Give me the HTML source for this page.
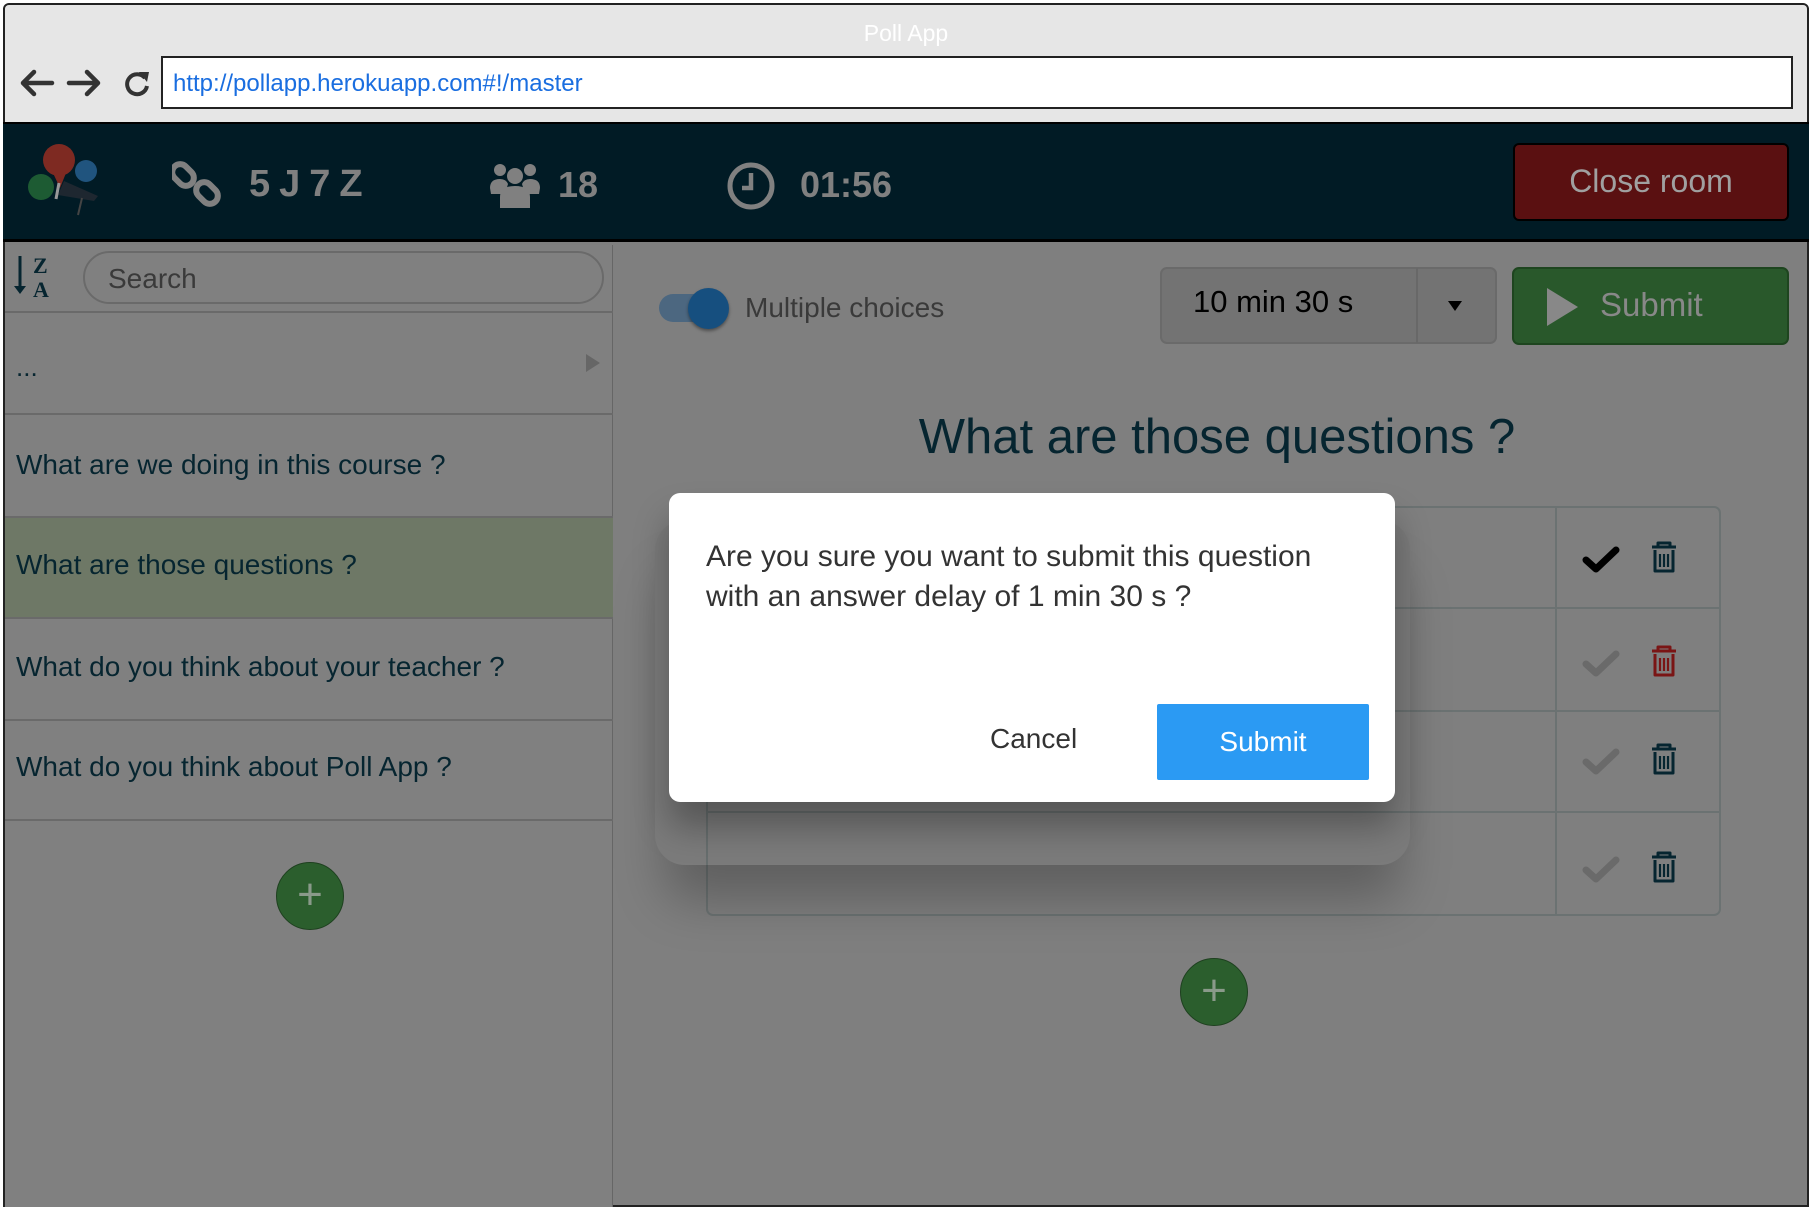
<!DOCTYPE html>
<html><head><meta charset="utf-8"><style>
*{box-sizing:border-box;margin:0;padding:0}
body{width:1812px;height:1210px;background:#fff;font-family:"Liberation Sans",Arial,sans-serif;position:relative;overflow:hidden}
.abs{position:absolute}
</style></head><body>
<div class="abs" style="left:3px;top:3px;width:1806px;height:1204px;border:2px solid #222;border-radius:6px 6px 0 0;background:#7f7f7f;overflow:hidden">
  <div class="abs" style="left:0;top:0;width:1802px;height:118px;background:#e6e6e6"></div>
</div>
<div class="abs" style="left:0;top:20px;width:1812px;text-align:center;color:#fff;font-size:23px">Poll App</div>
<svg class="abs" style="left:18px;top:66px" width="135" height="34" viewBox="0 0 135 34">
 <g stroke="#333" stroke-width="4.5" fill="none" stroke-linecap="round" stroke-linejoin="round">
  <path d="M34 17H5M16 6L5 17L16 28"/>
  <path d="M51 17H80M69 6L80 17L69 28"/>
 </g>
 <path d="M127 12A10 10 0 1 0 129 20" stroke="#333" stroke-width="4" fill="none"/>
 <path d="M121 6L131 6L129 16Z" fill="#333"/>
</svg>
<div class="abs" style="left:161px;top:56px;width:1632px;height:53px;border:2.5px solid #222;background:#fff;color:#1a6ee0;font-size:24px;line-height:52px;padding-left:10px">http://pollapp.herokuapp.com#!/master</div>
<div class="abs" style="left:3px;top:122px;width:1806px;height:120px;background:#011b25;border-top:2px solid #000;border-bottom:3px solid #000"></div>
<svg class="abs" style="left:26px;top:143px" width="80" height="75" viewBox="0 0 80 75">
 <circle cx="33" cy="17" r="16" fill="#7e2a22"/><path d="M27 30L34 45L40 30Z" fill="#7e2a22"/>
 <circle cx="60" cy="28" r="11" fill="#20547e"/>
 <circle cx="15" cy="44" r="13" fill="#1d5b33"/>
 <path d="M32 52L38 38L72 53L68 58Z" fill="#1e2730"/><path d="M33 40L30 56" stroke="#999" stroke-width="3"/>
 <path d="M56 55L52 72" stroke="#444" stroke-width="2"/>
</svg>
<svg class="abs" style="left:172px;top:158px" width="52" height="52" viewBox="0 0 52 52">
 <g fill="none" stroke="#808080" stroke-width="6"><rect x="3" y="5" width="16" height="24" rx="8" transform="rotate(-45 11 17)"/><rect x="27" y="23" width="16" height="24" rx="8" transform="rotate(-45 35 35)"/></g>
</svg>
<div class="abs" style="left:249px;top:162px;color:#808080;font-weight:bold;font-size:38px;letter-spacing:9px;line-height:44px">5J7Z</div>
<svg class="abs" style="left:490px;top:162px" width="50" height="46" viewBox="0 0 50 46">
 <g fill="#808080"><circle cx="10" cy="8" r="6"/><circle cx="40" cy="8" r="6"/><circle cx="25" cy="14" r="8"/>
 <path d="M0 26Q0 17 10 17Q16 17 18 22L15 32H1Z"/><path d="M50 26Q50 17 40 17Q34 17 32 22L35 32H49Z"/>
 <path d="M10 46V35Q10 24 25 24Q40 24 40 35V46Z"/></g>
</svg>
<div class="abs" style="left:558px;top:165px;color:#808080;font-weight:bold;font-size:36px;line-height:40px">18</div>
<svg class="abs" style="left:726px;top:161px" width="50" height="50" viewBox="0 0 50 50">
 <circle cx="25" cy="25" r="21" fill="none" stroke="#808080" stroke-width="5"/><path d="M25 12V27H16" fill="none" stroke="#808080" stroke-width="4.5"/>
</svg>
<div class="abs" style="left:800px;top:165px;color:#808080;font-weight:bold;font-size:36px;line-height:40px">01:56</div>
<div class="abs" style="left:1513px;top:143px;width:276px;height:78px;background:#5a1011;border:2px solid #000;border-radius:6px;color:#a0a0a0;font-size:32px;text-align:center;line-height:72px">Close room</div>
<div class="abs" style="left:5px;top:245px;width:608px;height:962px;background:#808080;border-right:1px solid #666"></div>
<svg class="abs" style="left:14px;top:254px" width="40" height="46" viewBox="0 0 40 46">
 <path d="M6 2V36" stroke="#062530" stroke-width="3"/><path d="M0 32L6 40L12 32Z" fill="#062530"/>
 <text x="19" y="19" font-family="Liberation Serif" font-weight="bold" font-size="22" fill="#062530">Z</text>
 <text x="19" y="43" font-family="Liberation Serif" font-weight="bold" font-size="22" fill="#062530">A</text>
</svg>
<div class="abs" style="left:83px;top:251px;width:521px;height:53px;border:2px solid #6a6a6a;border-radius:27px;color:#3a3a3a;font-size:28px;line-height:52px;padding-left:23px">Search</div>
<div class="abs" style="left:5px;top:311px;width:608px;height:2px;background:#6a6a6a"></div>
<div class="abs" style="left:16px;top:352px;color:#062530;font-size:26px">...</div>
<svg class="abs" style="left:584px;top:352px" width="18" height="22"><path d="M2 2L16 11L2 20Z" fill="#666"/></svg>
<div class="abs" style="left:5px;top:413px;width:608px;height:2px;background:#6a6a6a"></div>
<div class="abs" style="left:16px;top:449px;color:#062530;font-size:28px">What are we doing in this course ?</div>
<div class="abs" style="left:5px;top:516px;width:608px;height:103px;background:#6e7866;border-top:2px solid #6a6a6a;border-bottom:2px solid #6a6a6a"></div>
<div class="abs" style="left:16px;top:549px;color:#062530;font-size:28px">What are those questions ?</div>
<div class="abs" style="left:16px;top:651px;color:#062530;font-size:28px">What do you think about your teacher ?</div>
<div class="abs" style="left:5px;top:719px;width:608px;height:2px;background:#6a6a6a"></div>
<div class="abs" style="left:16px;top:751px;color:#062530;font-size:28px">What do you think about Poll App ?</div>
<div class="abs" style="left:5px;top:819px;width:608px;height:2px;background:#6a6a6a"></div>
<div class="abs" style="left:276px;top:862px;width:68px;height:68px;border-radius:50%;background:#2b5e2d;border:1.5px solid #1e401f;color:#8a9a8a;font-size:44px;text-align:center;line-height:64px">+</div>
<div class="abs" style="left:659px;top:294px;width:58px;height:28px;border-radius:14px;background:#4c6780"></div>
<div class="abs" style="left:688px;top:288px;width:41px;height:41px;border-radius:50%;background:#164f7f;box-shadow:0 2px 3px rgba(0,0,0,.4)"></div>
<div class="abs" style="left:745px;top:292px;color:#3a3a3a;font-size:28px">Multiple choices</div>
<div class="abs" style="left:1160px;top:267px;width:337px;height:77px;background:#737373;border:2px solid #6a6a6a;border-radius:7px"></div>
<div class="abs" style="left:1416px;top:268px;width:2px;height:75px;background:#686868"></div>
<div class="abs" style="left:1193px;top:284px;color:#000;font-size:31px">10 min 30 s</div>
<svg class="abs" style="left:1447px;top:300px" width="16" height="12"><path d="M1 1H15L8 11Z" fill="#000"/></svg>
<div class="abs" style="left:1512px;top:267px;width:277px;height:78px;background:#29582b;border:2px solid #1e451f;border-radius:7px"></div>
<svg class="abs" style="left:1546px;top:287px" width="34" height="40"><path d="M1 1L32 20L1 39Z" fill="#888"/></svg>
<div class="abs" style="left:1600px;top:286px;color:#888;font-size:33px">Submit</div>
<div class="abs" style="left:660px;top:409px;width:1114px;text-align:center;color:#062530;font-size:49px">What are those questions ?</div>
<div class="abs" style="left:706px;top:506px;width:1015px;height:410px;border:2px solid #6b7272;border-radius:7px"></div>
<div class="abs" style="left:1555px;top:507px;width:2px;height:408px;background:#6b7272"></div>
<div class="abs" style="left:707px;top:607px;width:1013px;height:2px;background:#6b7272"></div>
<div class="abs" style="left:707px;top:710px;width:1013px;height:2px;background:#6b7272"></div>
<div class="abs" style="left:707px;top:811px;width:1013px;height:2px;background:#6b7272"></div>
<svg class="abs" style="left:1580px;top:540px" width="110" height="380" viewBox="0 0 110 380">
 <defs>
  <g id="tr"><path d="M-12 -11H12M-6 -11V-15H6V-11" fill="none" stroke-width="3" stroke-linejoin="round"/><path d="M-9 -8V13H9V-8" fill="none" stroke-width="3" stroke-linejoin="round"/><path d="M-4 -4V9M0 -4V9M4 -4V9" stroke-width="2.2"/></g>
  <path id="ck" d="M-16 0L-6 9L14 -10" fill="none" stroke-width="7" stroke-linecap="round" stroke-linejoin="round"/>
 </defs>
 <use href="#ck" x="22" y="20" stroke="#000"/>
 <use href="#tr" x="84" y="18" stroke="#062530"/>
 <use href="#ck" x="22" y="124" stroke="#6a6a6a"/>
 <use href="#tr" x="84" y="122" stroke="#7a1515"/>
 <use href="#ck" x="22" y="222" stroke="#6a6a6a"/>
 <use href="#tr" x="84" y="220" stroke="#062530"/>
 <use href="#ck" x="22" y="330" stroke="#6a6a6a"/>
 <use href="#tr" x="84" y="328" stroke="#062530"/>
</svg>
<div class="abs" style="left:1180px;top:958px;width:68px;height:68px;border-radius:50%;background:#2b5e2d;border:1.5px solid #1e401f;color:#8a9a8a;font-size:44px;text-align:center;line-height:64px">+</div>
<!-- dialog -->
<div class="abs" style="left:655px;top:520px;width:755px;height:345px;border-radius:30px;background:rgba(0,0,0,0.03);box-shadow:0 45px 50px -10px rgba(0,0,0,.25)"></div>
<div class="abs" style="left:669px;top:493px;width:726px;height:309px;background:#fff;border-radius:11px;box-shadow:0 25px 35px rgba(0,0,0,.3)">
  <div class="abs" style="left:37px;top:44px;width:650px;color:#333;font-size:30px;line-height:40px">Are you sure you want to submit this question with an answer delay of 1 min 30 s ?</div>
  <div class="abs" style="left:321px;top:230px;color:#333;font-size:28px">Cancel</div>
  <div class="abs" style="left:488px;top:211px;width:212px;height:76px;background:#2b9af3;border-radius:2px;color:#fff;font-size:28px;text-align:center;line-height:76px">Submit</div>
</div>
</body></html>
